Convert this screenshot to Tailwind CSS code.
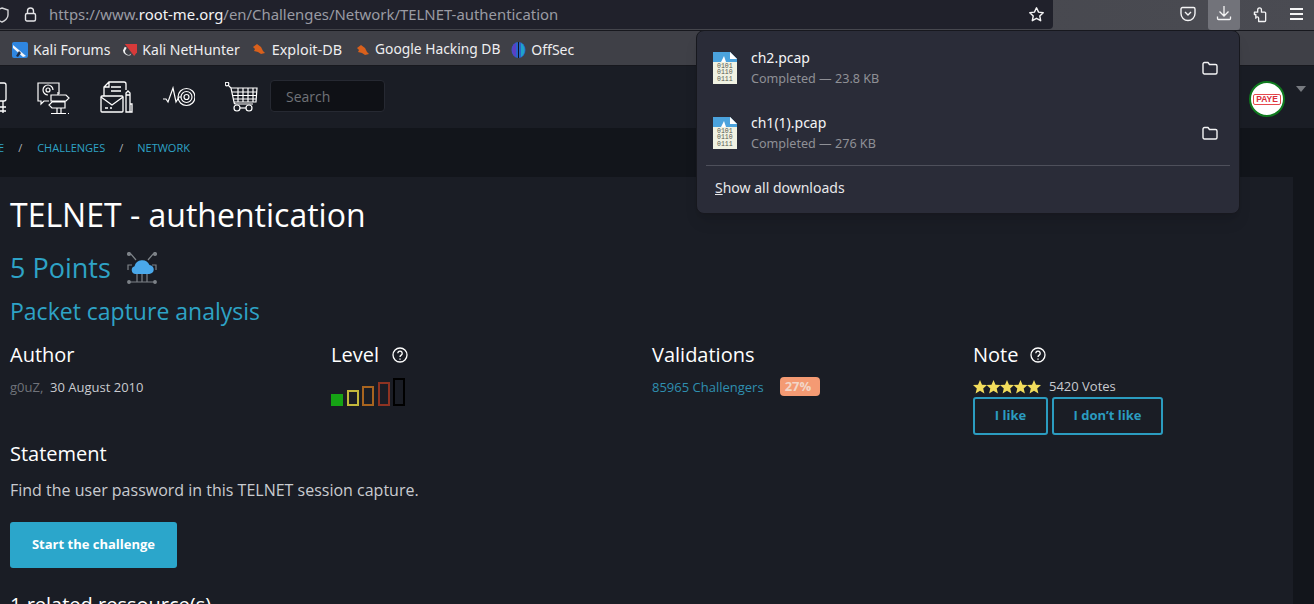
<!DOCTYPE html>
<html lang="en">

<head>
    <meta charset="UTF-8" />
    <title>TELNET - authentication</title>
    <script src="https://cdn.jsdelivr.net/npm/@tailwindcss/browser@4"></script>
</head>

<body class="relative w-[1314px] h-[604px] overflow-hidden bg-[#12151b] font-['Open_Sans',sans-serif] text-white">

    <!-- Browser toolbar -->
    <div class="flex h-[30px] bg-gradient-to-r from-[#3f4046] to-[#4a4b52] font-['Noto_Sans',sans-serif]">
        <div class="flex items-center w-[1053px] h-[29px] bg-[#20212b] rounded-br-[4px] shrink-0 relative">
            <svg class="absolute left-[-5px] top-[7px] w-[14px] h-[16px]" viewBox="0 0 14 16" fill="none" stroke="#d4d4d8" stroke-width="1.4"><path d="M7 1l6 2v5c0 3-3 6-6 7-3-1-6-4-6-7V3z" /></svg>
            <svg class="absolute left-[24px] top-[7px] w-[13px] h-[15px]" viewBox="0 0 13 15" fill="none" stroke="#e4e4e7" stroke-width="1.4"><rect x="1.5" y="6.5" width="10" height="7.5" rx="1.5" /><path d="M3.5 6.500V4a3 3 0 0 1 6 0v2.500" /></svg>
            <p class="ml-[49px] text-[14.900px] text-[#9a9ba3] whitespace-nowrap">https://www.<span class="text-[#f4f4f5]">root-me.org</span>/en/Challenges/Network/TELNET-authentication</p>
            <svg class="absolute left-[1028px] top-[6px] w-[17px] h-[17px]" viewBox="0 0 24 24" fill="none" stroke="#f4f4f5" stroke-width="2" stroke-linejoin="round"><path d="M12 2.500l2.900 6.200 6.600.8-4.900 4.600 1.300 6.700-5.900-3.400-5.900 3.400 1.300-6.700-4.900-4.600 6.600-.8z" /></svg>
        </div>
        <div class="flex-1 flex items-start justify-end pr-[11px]">
            <svg class="w-[16px] h-[16px] mt-[6px] mr-[12px]" viewBox="0 0 16 16" fill="none" stroke="#f4f4f5" stroke-width="1.4" stroke-linejoin="round"><path d="M2.500 1.500h11a1.500 1.500 0 0 1 1.500 1.500v4.500a7 7 0 0 1-14 0V3a1.500 1.500 0 0 1 1.500-1.500z" /><path d="M5 6l3 3 3-3" /></svg>
            <div class="w-[32px] h-[30px] bg-[#72737a] rounded-b-[3px] flex justify-center pt-[5px] mr-[13px]">
                <svg class="w-[16px] h-[16px]" viewBox="0 0 16 16" fill="none" stroke="#f4f4f5" stroke-width="1.3"><path d="M8 1v9.500M3.500 6.500L8 11l4.500-4.500M1.500 11.500v2a1 1 0 0 0 1 1h11a1 1 0 0 0 1-1v-2" /></svg>
            </div>
            <svg class="w-[15px] h-[18px] mt-[5px] mr-[22px]" viewBox="0 0 16 18" fill="none" stroke="#f4f4f5" stroke-width="1.4" stroke-linejoin="round"><path d="M1.500 7h3.500V4.500a2 2 0 0 1 4 0V7h3.500a1 1 0 0 1 1 1v8a1 1 0 0 1-1 1H6v-3.500a1.500 1.500 0 0 0-3 0V9.500H1.500z" /></svg>
            <div class="flex flex-col gap-[3.500px] w-[13px] mt-[8px]">
                <div class="h-[1.500px] bg-[#f4f4f5]"></div>
                <div class="h-[1.500px] bg-[#f4f4f5]"></div>
                <div class="h-[1.500px] bg-[#f4f4f5]"></div>
            </div>
        </div>
    </div>

    <!-- Bookmarks -->
    <div class="flex items-center h-[36px] pl-[12px] pt-[3px] bg-[#3f4047] border-t border-b border-[#17181e] text-[14px] text-[#eeeef0] font-['Noto_Sans',sans-serif] whitespace-nowrap">
        <div class="flex items-center gap-[5px] mr-[12px]">
            <svg class="w-[16px] h-[16px]" viewBox="0 0 16 16"><rect width="16" height="16" rx="2" fill="#2f86e0" /><path d="M1 3l13 11-3 1L1 6z" fill="#f4f6fa" /><path d="M7 9l-3 5 2 1 3-4z" fill="#1c2e4a" /></svg>
            <span>Kali Forums</span>
        </div>
        <div class="flex items-center gap-[5px] mr-[12px]">
            <svg class="w-[15px] h-[15px]" viewBox="0 0 16 16"><path d="M3 2h13v9l-3 4z" fill="#d63a3a" /><path d="M1 9a6 6 0 0 0 8 5l1-2a3 3 0 0 1-6-4l1-2-2-1z" fill="#f1f1f1" /></svg>
            <span>Kali NetHunter</span>
        </div>
        <div class="flex items-center gap-[6px] mr-[14px]">
            <svg class="w-[14px] h-[14px]" viewBox="0 0 14 14"><path d="M1 5l4-3 4 3 2 4 2 2-4 1-3-2-4-1 1-2z" fill="#d9601c" /></svg>
            <span class="text-[14.400px]">Exploit-DB</span>
        </div>
        <div class="flex items-center gap-[5px] mr-[11px]">
            <svg class="w-[14px] h-[14px]" viewBox="0 0 14 14"><path d="M1 5l4-3 4 3 2 4 2 2-4 1-3-2-4-1 1-2z" fill="#d9601c" /></svg>
            <span class="text-[13.800px]">Google Hacking DB</span>
        </div>
        <div class="flex items-center gap-[5px]">
            <svg class="w-[15px] h-[16px]" viewBox="0 0 15 16"><ellipse cx="7.500" cy="8" rx="7" ry="8" fill="#2a63c9" /><path d="M7 0h1v16H7z" fill="#101522" /><path d="M1 8a7 8 0 0 1 4-7v14a7 8 0 0 1-4-7z" fill="#5b3fc4" /><path d="M10 1a7 8 0 0 1 0 14z" fill="#1fa3c9" /></svg>
            <span>OffSec</span>
        </div>
    </div>

    <!-- Site header -->
    <div class="relative flex items-center h-[62px] bg-[#1a1d25]">
        <div class="flex items-center ml-[-14px] gap-[30px] w-[284px]">
            <svg class="w-[21px] h-[32px] text-white" viewBox="0 0 21 32" fill="none" stroke="currentColor" stroke-width="1.300"><rect x="3" y="2" width="17" height="18" rx="2" /><path d="M7 26h13M7 30h13M10 20v12M17 20v12" /></svg>
            <svg class="w-[33px] h-[33px]" viewBox="0 0 33 33" fill="none" stroke="#fff" stroke-width="1.200"><path d="M22 13V2H1v18h3v3l3-3h5" /><circle cx="11" cy="9" r="2" /><path d="M11 14a5 5 0 1 1 5-5" /><path d="M14 14h15l3 3-3 3H14zM28 21H15l-3 3 3 3h13zM21 11v3M20 27v6M24 27v6M14 32.500h15M31 32.500h1" /></svg>
            <svg class="w-[33px] h-[34px]" viewBox="0 0 33 34" fill="none" stroke="#fff" stroke-width="1.300"><path d="M4 16V7l5-5h15a2 2 0 0 1 2 2v6M4 7h5V2M11 11h10M11 7h10" /><rect x="1" y="16" width="22" height="16" rx="1" /><path d="M1 17l11 8 11-8M5 28h3M10 28h2" /><path d="M26 32V13l2-2 2 2v19zM26 15h4M30 24h2v8h-2" /></svg>
            <svg class="w-[32px] h-[22px]" viewBox="0 0 32 22" fill="none" stroke="#fff" stroke-width="1.200"><path d="M0 13h3l2 3 5-14 3 14 3-5h2" /><circle cx="23.500" cy="11" r="8.500" /><circle cx="23.500" cy="11" r="5.500" /><circle cx="23.500" cy="11" r="2.500" /></svg>
            <svg class="w-[33px] h-[30px]" viewBox="0 0 33 30" fill="none" stroke="#fff" stroke-width="1.200"><circle cx="2" cy="2" r="1.800" /><path d="M3 3l3 3 3 14a2 2 0 0 0 2 2h17" /><path d="M6 6h26l-1 14H9M7 10h25M8 13.500h24M8.500 17h23M13 6v14M18 6v14M23 6v14M28 6v14" /><circle cx="12" cy="26" r="3" /><circle cx="24" cy="26" r="3" /><path d="M15 26h6" /></svg>
        </div>
        <div class="w-[115px] h-[32px] mb-[2px] bg-[#0f1116] border border-[#262932] rounded-[4px] flex items-center pl-[15px] text-[14px] text-[#6f7278]">Search</div>
        <div class="absolute left-[1249px] top-[15px] w-[36px] h-[36px] rounded-full bg-white border-2 border-[#0f7a1e] flex items-center justify-center">
            <span class="border border-[#e5484d] rounded-[2px] px-[2px] text-[8.500px] leading-[9px] font-bold text-[#d92d3a] font-['Liberation_Sans',sans-serif]">PAYÉ</span>
        </div>
        <div class="absolute left-[1296px] top-[20px] border-x-[5px] border-x-transparent border-t-[6px] border-t-[#777a80]"></div>
    </div>

    <!-- Breadcrumb -->
    <div class="flex items-center h-[49px] pb-[8px] ml-[-2px] text-[11px] text-[#2ea3c6] whitespace-nowrap">
        <span>E</span>
        <span class="ml-[14px] mr-[15px] text-[#aeb1b6]">/</span>
        <span>CHALLENGES</span>
        <span class="mx-[14px] text-[#aeb1b6]">/</span>
        <span>NETWORK</span>
    </div>

    <!-- Main content -->
    <main class="w-[1293px] pl-[10px] bg-[#1a1d25] h-[427px]">
        <h1 class="pt-[16px] text-[32px] leading-[44px]">TELNET - authentication</h1>
        <div class="flex items-center gap-[15px] mt-[12px]">
            <h2 class="text-[27px] leading-[38px] text-[#2ea3c6]">5 Points</h2>
            <svg class="w-[32px] h-[32px]" viewBox="0 0 32 32" fill="none" stroke="#7d8288" stroke-width="1.200"><circle cx="3" cy="2" r="1.500" fill="#7d8288" /><circle cx="29" cy="2" r="1.500" fill="#7d8288" /><path d="M3 2h2l5 6M29 2h-2l-5 6M2 17v-4h4M30 17v-4h-4M2 17v1M30 17v1" /><path d="M3 30h26M11 22v8M16 22v8M21 22v8" /><circle cx="3" cy="30" r="1.300" fill="#7d8288" /><circle cx="29" cy="30" r="1.300" fill="#7d8288" /><path d="M9.500 22a4 4 0 0 1-1-7.800A8 8 0 0 1 23.500 13a4.500 4.500 0 0 1-.5 9z" fill="#4aa8ea" stroke="none" /></svg>
        </div>
        <h3 class="mt-[8px] text-[23px] leading-[33px] text-[#2ea3c6]">Packet capture analysis</h3>

        <div class="grid grid-cols-[321px_321px_321px_321px] mt-[13px]">
            <div>
                <h4 class="text-[20px] leading-[27px]">Author</h4>
                <p class="mt-[10px] text-[13px] leading-[18px] text-[#c9cbd0]"><span class="text-[#70737a]">g0uZ,</span>&nbsp; 30 August 2010</p>
            </div>
            <div>
                <div class="flex items-center gap-[13px]">
                    <h4 class="text-[20px] leading-[27px]">Level</h4>
                    <svg class="w-[16px] h-[16px]" viewBox="0 0 16 16" fill="none" stroke="#fff" stroke-width="1.300"><circle cx="8" cy="8" r="7" /><path d="M5.800 6.200a2.200 2.200 0 1 1 3.400 1.900c-.8.500-1.200 1-1.200 2" /><path d="M8 11.500v1.200" /></svg>
                </div>
                <div class="flex items-end gap-[3.500px] h-[29px] mt-[9px]">
                    <div class="w-[12px] h-[12px] bg-[#15a314]"></div>
                    <div class="w-[12px] h-[16px] border-2 border-[#c3b83c]"></div>
                    <div class="w-[12px] h-[20px] border-2 border-[#a8641f]"></div>
                    <div class="w-[12px] h-[24px] border-2 border-[#8e3322]"></div>
                    <div class="w-[12px] h-[28px] border-2 border-black"></div>
                </div>
            </div>
            <div>
                <h4 class="text-[20px] leading-[27px]">Validations</h4>
                <div class="flex items-center gap-[16px] mt-[9px]">
                    <span class="text-[13px] leading-[18px] text-[#2f8fb0]">85965 Challengers</span>
                    <span class="w-[40px] h-[19px] rounded-[4px] bg-[#f49a73] text-[13px] font-bold leading-[19px] pl-[5px] text-[#f2d6c8]">27%</span>
                </div>
            </div>
            <div>
                <div class="flex items-center gap-[12px]">
                    <h4 class="text-[20px] leading-[27px]">Note</h4>
                    <svg class="w-[16px] h-[16px]" viewBox="0 0 16 16" fill="none" stroke="#fff" stroke-width="1.300"><circle cx="8" cy="8" r="7" /><path d="M5.800 6.200a2.200 2.200 0 1 1 3.400 1.900c-.8.500-1.200 1-1.200 2" /><path d="M8 11.500v1.200" /></svg>
                </div>
                <div class="flex items-center mt-[10px] h-[18px]">
                    <svg class="w-[68px] h-[14px]" viewBox="0 0 68 14" fill="#f2dd5c"><path d="M7 0l2 4.700 5 .4-3.800 3.300 1.200 5L7 10.700 2.600 13.400l1.200-5L0 5.100l5-.4z" /><path transform="translate(13.500)" d="M7 0l2 4.700 5 .4-3.800 3.300 1.200 5L7 10.700 2.600 13.400l1.200-5L0 5.100l5-.4z" /><path transform="translate(27)" d="M7 0l2 4.700 5 .4-3.800 3.300 1.200 5L7 10.700 2.600 13.400l1.200-5L0 5.100l5-.4z" /><path transform="translate(40.500)" d="M7 0l2 4.700 5 .4-3.800 3.300 1.200 5L7 10.700 2.600 13.400l1.200-5L0 5.100l5-.4z" /><path transform="translate(54)" d="M7 0l2 4.700 5 .4-3.800 3.300 1.200 5L7 10.700 2.600 13.400l1.200-5L0 5.100l5-.4z" /></svg>
                    <span class="ml-[8px] text-[13px] text-[#c9cbd0]">5420 Votes</span>
                </div>
                <div class="flex gap-[4px] mt-[1px]">
                    <button class="w-[75px] h-[38px] border-2 border-[#2b9cc0] rounded-[3px] text-[13px] font-bold text-[#2b9cc0]">I like</button>
                    <button class="w-[111px] h-[38px] border-2 border-[#2b9cc0] rounded-[3px] text-[13px] font-bold text-[#2b9cc0]">I don’t like</button>
                </div>
            </div>
        </div>

        <h4 class="mt-[5px] text-[20px] leading-[27px]">Statement</h4>
        <p class="mt-[12px] text-[16px] leading-[22px] text-[#c9cbd0]">Find the user password in this TELNET session capture.</p>
        <button class="block mt-[21px] w-[167px] h-[46px] rounded-[3px] bg-[#2ba6cb] text-[13px] font-bold">Start the challenge</button>
        <h4 class="mt-[23px] text-[20px] leading-[27px]">1 related ressource(s)</h4>
    </main>

    <!-- Downloads panel -->
    <div class="absolute left-[696px] top-[30px] w-[544px] h-[184px] bg-[#2a2c38] rounded-[8px] border border-[#17181e] px-[9px] font-['Noto_Sans',sans-serif] shadow-lg">
        <div class="flex items-center h-[65px] pl-[7px] pr-[12px] mt-[4px]">
            <svg class="w-[24px] h-[32px] shrink-0" viewBox="0 0 24 32"><path d="M0 0h17l7 7v25H0z" fill="#f0f2e2" /><path d="M0 0h17l7 7v3H0z" fill="#4ba3dd" /><path d="M17 0l7 7h-7zM8 10l3-6 2 6z" fill="#fff" /><text x="4" y="15.500" font-family="Liberation Mono" font-size="6.500" fill="#55584f">0101</text><text x="4" y="22" font-family="Liberation Mono" font-size="6.500" fill="#55584f">0110</text><text x="4" y="28.500" font-family="Liberation Mono" font-size="6.500" fill="#55584f">0111</text></svg>
            <div class="ml-[14px] flex-1">
                <p class="text-[14px] leading-[19px] text-[#f4f4f5]">ch2.pcap</p>
                <p class="mt-[3px] text-[12.600px] leading-[17px] text-[#8f9096]">Completed — 23.8 KB</p>
            </div>
            <svg class="w-[16px] h-[14px]" viewBox="0 0 16 14" fill="none" stroke="#f4f4f5" stroke-width="1.400" stroke-linejoin="round"><path d="M1 3a1.500 1.500 0 0 1 1.500-1.500H6l1.500 2h6A1.500 1.500 0 0 1 15 5v6.500a1.500 1.500 0 0 1-1.500 1.500h-11A1.500 1.500 0 0 1 1 11.500z" /></svg>
        </div>
        <div class="flex items-center h-[65px] pl-[7px] pr-[12px]">
            <svg class="w-[24px] h-[32px] shrink-0" viewBox="0 0 24 32"><path d="M0 0h17l7 7v25H0z" fill="#f0f2e2" /><path d="M0 0h17l7 7v3H0z" fill="#4ba3dd" /><path d="M17 0l7 7h-7zM8 10l3-6 2 6z" fill="#fff" /><text x="4" y="15.500" font-family="Liberation Mono" font-size="6.500" fill="#55584f">0101</text><text x="4" y="22" font-family="Liberation Mono" font-size="6.500" fill="#55584f">0110</text><text x="4" y="28.500" font-family="Liberation Mono" font-size="6.500" fill="#55584f">0111</text></svg>
            <div class="ml-[14px] flex-1">
                <p class="text-[14px] leading-[19px] text-[#f4f4f5]">ch1(1).pcap</p>
                <p class="mt-[3px] text-[12.600px] leading-[17px] text-[#8f9096]">Completed — 276 KB</p>
            </div>
            <svg class="w-[16px] h-[14px]" viewBox="0 0 16 14" fill="none" stroke="#f4f4f5" stroke-width="1.400" stroke-linejoin="round"><path d="M1 3a1.500 1.500 0 0 1 1.500-1.500H6l1.500 2h6A1.500 1.500 0 0 1 15 5v6.500a1.500 1.500 0 0 1-1.500 1.500h-11A1.500 1.500 0 0 1 1 11.500z" /></svg>
        </div>
        <div class="border-t border-[#4e505b] h-[44px] flex items-center pl-[9px] text-[14px] text-[#e8e8ea]"><span><span class="underline">S</span>how all downloads</span></div>
    </div>

</body>

</html>
